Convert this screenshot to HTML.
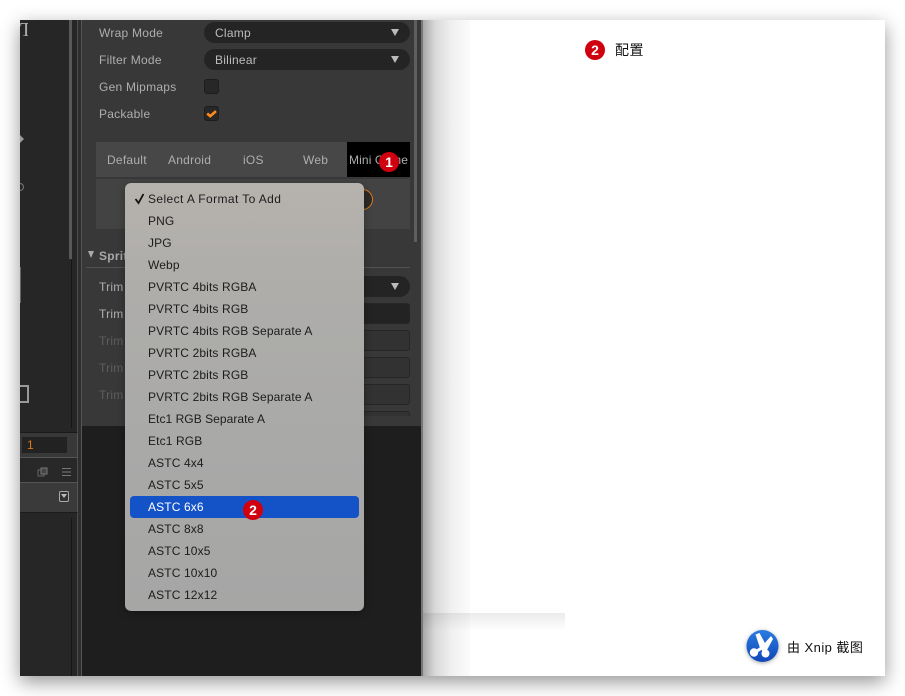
<!DOCTYPE html>
<html><head><meta charset="utf-8"><style>
html,body{margin:0;padding:0;background:#fff}
body{width:905px;height:696px;overflow:hidden;position:relative;font-family:"Liberation Sans","Noto Sans CJK SC",sans-serif}
div{position:absolute;box-sizing:border-box}
.t{font-size:12px;line-height:16px;color:#aeaeae;white-space:nowrap;letter-spacing:.25px}
.sel{background:#242424;border-radius:11px;height:21px;left:204px;width:206px}
.tri{width:0;height:0;border-left:4px solid transparent;border-right:4px solid transparent;border-top:7px solid #bbb}
.in{left:204px;width:206px;height:21px;border:1px solid #262626;border-radius:3px;background:#323232}
.m{left:148px;font-size:12px;line-height:16px;color:#1c1c1c;white-space:nowrap;letter-spacing:.13px}
.b{width:20px;height:20px;border-radius:50%;background:#d0000f;color:#fff;font:bold 14px/20px "Liberation Sans",sans-serif;text-align:center}
</style></head><body>
<div id="win" style="left:20px;top:20px;width:865px;height:656px;background:#fff;box-shadow:0 6px 18px rgba(0,0,0,.42)"></div>
<div style="left:20px;top:20px;width:865px;height:656px;overflow:hidden">
 <div style="left:403px;top:0;width:47px;height:656px;background:linear-gradient(90deg,#a8a8a8,#d8d8d8 25%,#f0f0f0 60%,#fbfbfb 100%)"></div>
 <div style="left:403px;top:593px;width:142px;height:18px;background:linear-gradient(180deg,rgba(0,0,0,.08),rgba(0,0,0,0))"></div>
</div>
<!-- left -->
<div style="left:20px;top:20px;width:62px;height:656px;background:#262626"></div>
<div style="left:69px;top:20px;width:3px;height:239px;background:#585858"></div>
<div style="left:71px;top:260px;width:1px;height:168px;background:#161616"></div>
<div style="left:77px;top:20px;width:1px;height:656px;background:#4d4d4d"></div>
<div style="left:78px;top:20px;width:3px;height:656px;background:#2e2e2e"></div>
<div style="left:81px;top:20px;width:1px;height:656px;background:#555"></div>
<div style="left:20px;top:20px;font:20px/20px 'Liberation Serif',serif;color:#aaa;width:8px;overflow:hidden;height:16px">T</div>
<div style="left:20px;top:135px;width:0;height:0;border-left:4px solid #999;border-top:4px solid transparent;border-bottom:4px solid transparent"></div>
<div style="left:20px;top:183px;width:4px;height:8px;border:1px solid #777;border-left:0;border-radius:0 4px 4px 0"></div>
<div style="left:20px;top:267px;width:1px;height:36px;background:#666"></div>
<div style="left:20px;top:385px;width:9px;height:18px;border:2px solid #999;border-left:0"></div>
<div style="left:20px;top:432px;width:58px;height:26px;background:#383838;border-top:1px solid #1a1a1a;border-bottom:1px solid #555;border-right:1px solid #555"></div>
<div style="left:22px;top:437px;width:45px;height:16px;background:#222"></div>
<div style="left:27px;top:437px;font-size:12px;line-height:17px;color:#d9791a">1</div>
<div style="left:20px;top:458px;width:57px;height:24px;background:#282828"></div>
<svg style="position:absolute;left:36px;top:466px" width="38" height="12"><rect x="2" y="4" width="6" height="6" fill="none" stroke="#666"/><rect x="5" y="2" width="6" height="6" fill="#444" stroke="#777"/><path d="M26 2.5h9M26 6h9M26 9.5h9" stroke="#777" stroke-width="1"/></svg>
<div style="left:20px;top:482px;width:58px;height:31px;background:#3a3a3a;border-top:1px solid #555;border-bottom:1px solid #1c1c1c;border-right:1px solid #555"></div>
<div style="left:59px;top:491px;width:10px;height:11px;border:1.5px solid #aaa;border-radius:2px;background:#333"></div>
<div style="left:61px;top:494px;width:0;height:0;border-left:3px solid transparent;border-right:3px solid transparent;border-top:4px solid #bbb"></div>
<div style="left:71px;top:518px;width:1px;height:158px;background:#161616"></div>
<!-- inspector -->
<div style="left:82px;top:20px;width:339px;height:406px;background:#383838"></div>
<div style="left:82px;top:426px;width:339px;height:250px;background:#1e1e1e"></div>
<div style="left:414px;top:20px;width:3px;height:222px;background:#5e5e5e"></div>
<div style="left:421px;top:20px;width:2px;height:656px;background:#777"></div>
<div class="t" style="left:99px;top:25px">Wrap Mode</div>
<div class="t" style="left:99px;top:52px">Filter Mode</div>
<div class="t" style="left:99px;top:79px">Gen Mipmaps</div>
<div class="t" style="left:99px;top:106px">Packable</div>
<div class="sel" style="top:22px"></div><div class="sel" style="top:49px"></div>
<div class="t" style="left:215px;top:25px;color:#bdbdbd">Clamp</div>
<div class="t" style="left:215px;top:52px;color:#bdbdbd">Bilinear</div>
<div class="tri" style="left:391px;top:29px"></div><div class="tri" style="left:391px;top:56px"></div>
<div style="left:204px;top:79px;width:15px;height:15px;background:#272727;border:1px solid #1d1d1d;border-radius:3px"></div>
<div style="left:204px;top:106px;width:15px;height:15px;background:#272727;border:1px solid #1d1d1d;border-radius:3px"></div>
<svg style="position:absolute;left:204px;top:106px" width="15" height="15"><path d="M3.2 7.5l3 2.6 5.8-5" fill="none" stroke="#ff8a1e" stroke-width="2.6"/></svg>
<div style="left:96px;top:142px;width:251px;height:35px;background:#474747"></div>
<div style="left:347px;top:142px;width:63px;height:35px;background:#000"></div>
<div class="t" style="left:107px;top:152px">Default</div>
<div class="t" style="left:168px;top:152px">Android</div>
<div class="t" style="left:243px;top:152px">iOS</div>
<div class="t" style="left:303px;top:152px">Web</div>
<div class="t" style="left:349px;top:152px;letter-spacing:.12px">Mini Game</div>
<div style="left:96px;top:179px;width:314px;height:50px;background:#434343"></div>
<div style="left:340px;top:189px;width:33px;height:21px;border:1px solid #e07a15;border-radius:11px;background:#2a2a2a"></div>
<div style="left:88px;top:251px;width:0;height:0;border-left:3.5px solid transparent;border-right:3.5px solid transparent;border-top:7px solid #aaa"></div>
<div class="t" style="left:99px;top:248px;font-weight:bold;color:#a8a8a8">Sprite</div>
<div style="left:86px;top:267px;width:324px;height:1px;background:#525252"></div>
<div class="t" style="left:99px;top:279px">Trim</div>
<div class="t" style="left:99px;top:306px">Trim</div>
<div class="t" style="left:99px;top:333px;color:#5e5e5e">Trim</div>
<div class="t" style="left:99px;top:360px;color:#5e5e5e">Trim</div>
<div class="t" style="left:99px;top:387px;color:#5e5e5e">Trim</div>
<div class="sel" style="top:276px"></div><div class="tri" style="left:391px;top:283px"></div>
<div class="in" style="top:303px;background:#232323"></div>
<div class="in" style="top:330px"></div><div class="in" style="top:357px"></div><div class="in" style="top:384px"></div>
<div class="in" style="top:411px;height:5px;border-bottom:0;border-radius:3px 3px 0 0"></div>
<!-- menu -->
<div style="left:125px;top:183px;width:239px;height:428px;border-radius:6px;background:linear-gradient(180deg,#b6b2ae 0,#aeadaa 25%,#a9a9a8 60%,#a6a6a5 100%);box-shadow:0 2px 8px rgba(0,0,0,.3)"></div>
<div style="left:130px;top:496px;width:229px;height:22px;background:#1453c7;border-radius:4px"></div>
<svg style="position:absolute;left:134px;top:192px" width="12" height="13"><path d="M1.5 7l3 4 5-9" fill="none" stroke="#111" stroke-width="1.8"/></svg>
<div class="m" style="top:191px;letter-spacing:.4px">Select A Format To Add</div>
<div class="m" style="top:213px">PNG</div>
<div class="m" style="top:235px">JPG</div>
<div class="m" style="top:257px">Webp</div>
<div class="m" style="top:279px">PVRTC 4bits RGBA</div>
<div class="m" style="top:301px">PVRTC 4bits RGB</div>
<div class="m" style="top:323px">PVRTC 4bits RGB Separate A</div>
<div class="m" style="top:345px">PVRTC 2bits RGBA</div>
<div class="m" style="top:367px">PVRTC 2bits RGB</div>
<div class="m" style="top:389px">PVRTC 2bits RGB Separate A</div>
<div class="m" style="top:411px;letter-spacing:.05px">Etc1 RGB Separate A</div>
<div class="m" style="top:433px">Etc1 RGB</div>
<div class="m" style="top:455px">ASTC 4x4</div>
<div class="m" style="top:477px">ASTC 5x5</div>
<div class="m" style="top:499px;color:#fff">ASTC 6x6</div>
<div class="m" style="top:521px">ASTC 8x8</div>
<div class="m" style="top:543px">ASTC 10x5</div>
<div class="m" style="top:565px">ASTC 10x10</div>
<div class="m" style="top:587px">ASTC 12x12</div>
<!-- badges -->
<div class="b" style="left:379px;top:152px">1</div>
<div class="b" style="left:243px;top:500px">2</div>
<div class="b" style="left:585px;top:40px">2</div>
<div style="left:615px;top:41px;font-size:14px;line-height:18px;color:#111;letter-spacing:.5px">配置</div>
<!-- logo -->
<svg style="position:absolute;left:745px;top:629px;filter:drop-shadow(0 1px 2px rgba(0,0,0,.35))" width="34" height="34" viewBox="0 0 34 34">
<defs><linearGradient id="g" x1="0" y1="0" x2="0" y2="1"><stop offset="0" stop-color="#2a7be0"/><stop offset="1" stop-color="#1247b8"/></linearGradient></defs>
<circle cx="17.5" cy="17" r="16" fill="url(#g)"/>
<path d="M10.5 5.5l4-1.5 6.5 12-3 5-3-2z" fill="#fff"/>
<path d="M26 7l2 3-6 11-4 1 0-6z" fill="#fff"/>
<path d="M9 24l9-6M20 25l-3-7" stroke="#fff" stroke-width="3" fill="none"/>
<circle cx="9" cy="23.5" r="4.2" fill="#fff"/><circle cx="20.5" cy="24.5" r="4" fill="#fff"/>
</svg>
<div style="left:787px;top:639px;font-size:13px;line-height:17px;color:#111;white-space:nowrap;letter-spacing:.45px">由 Xnip 截图</div>
</body></html>
